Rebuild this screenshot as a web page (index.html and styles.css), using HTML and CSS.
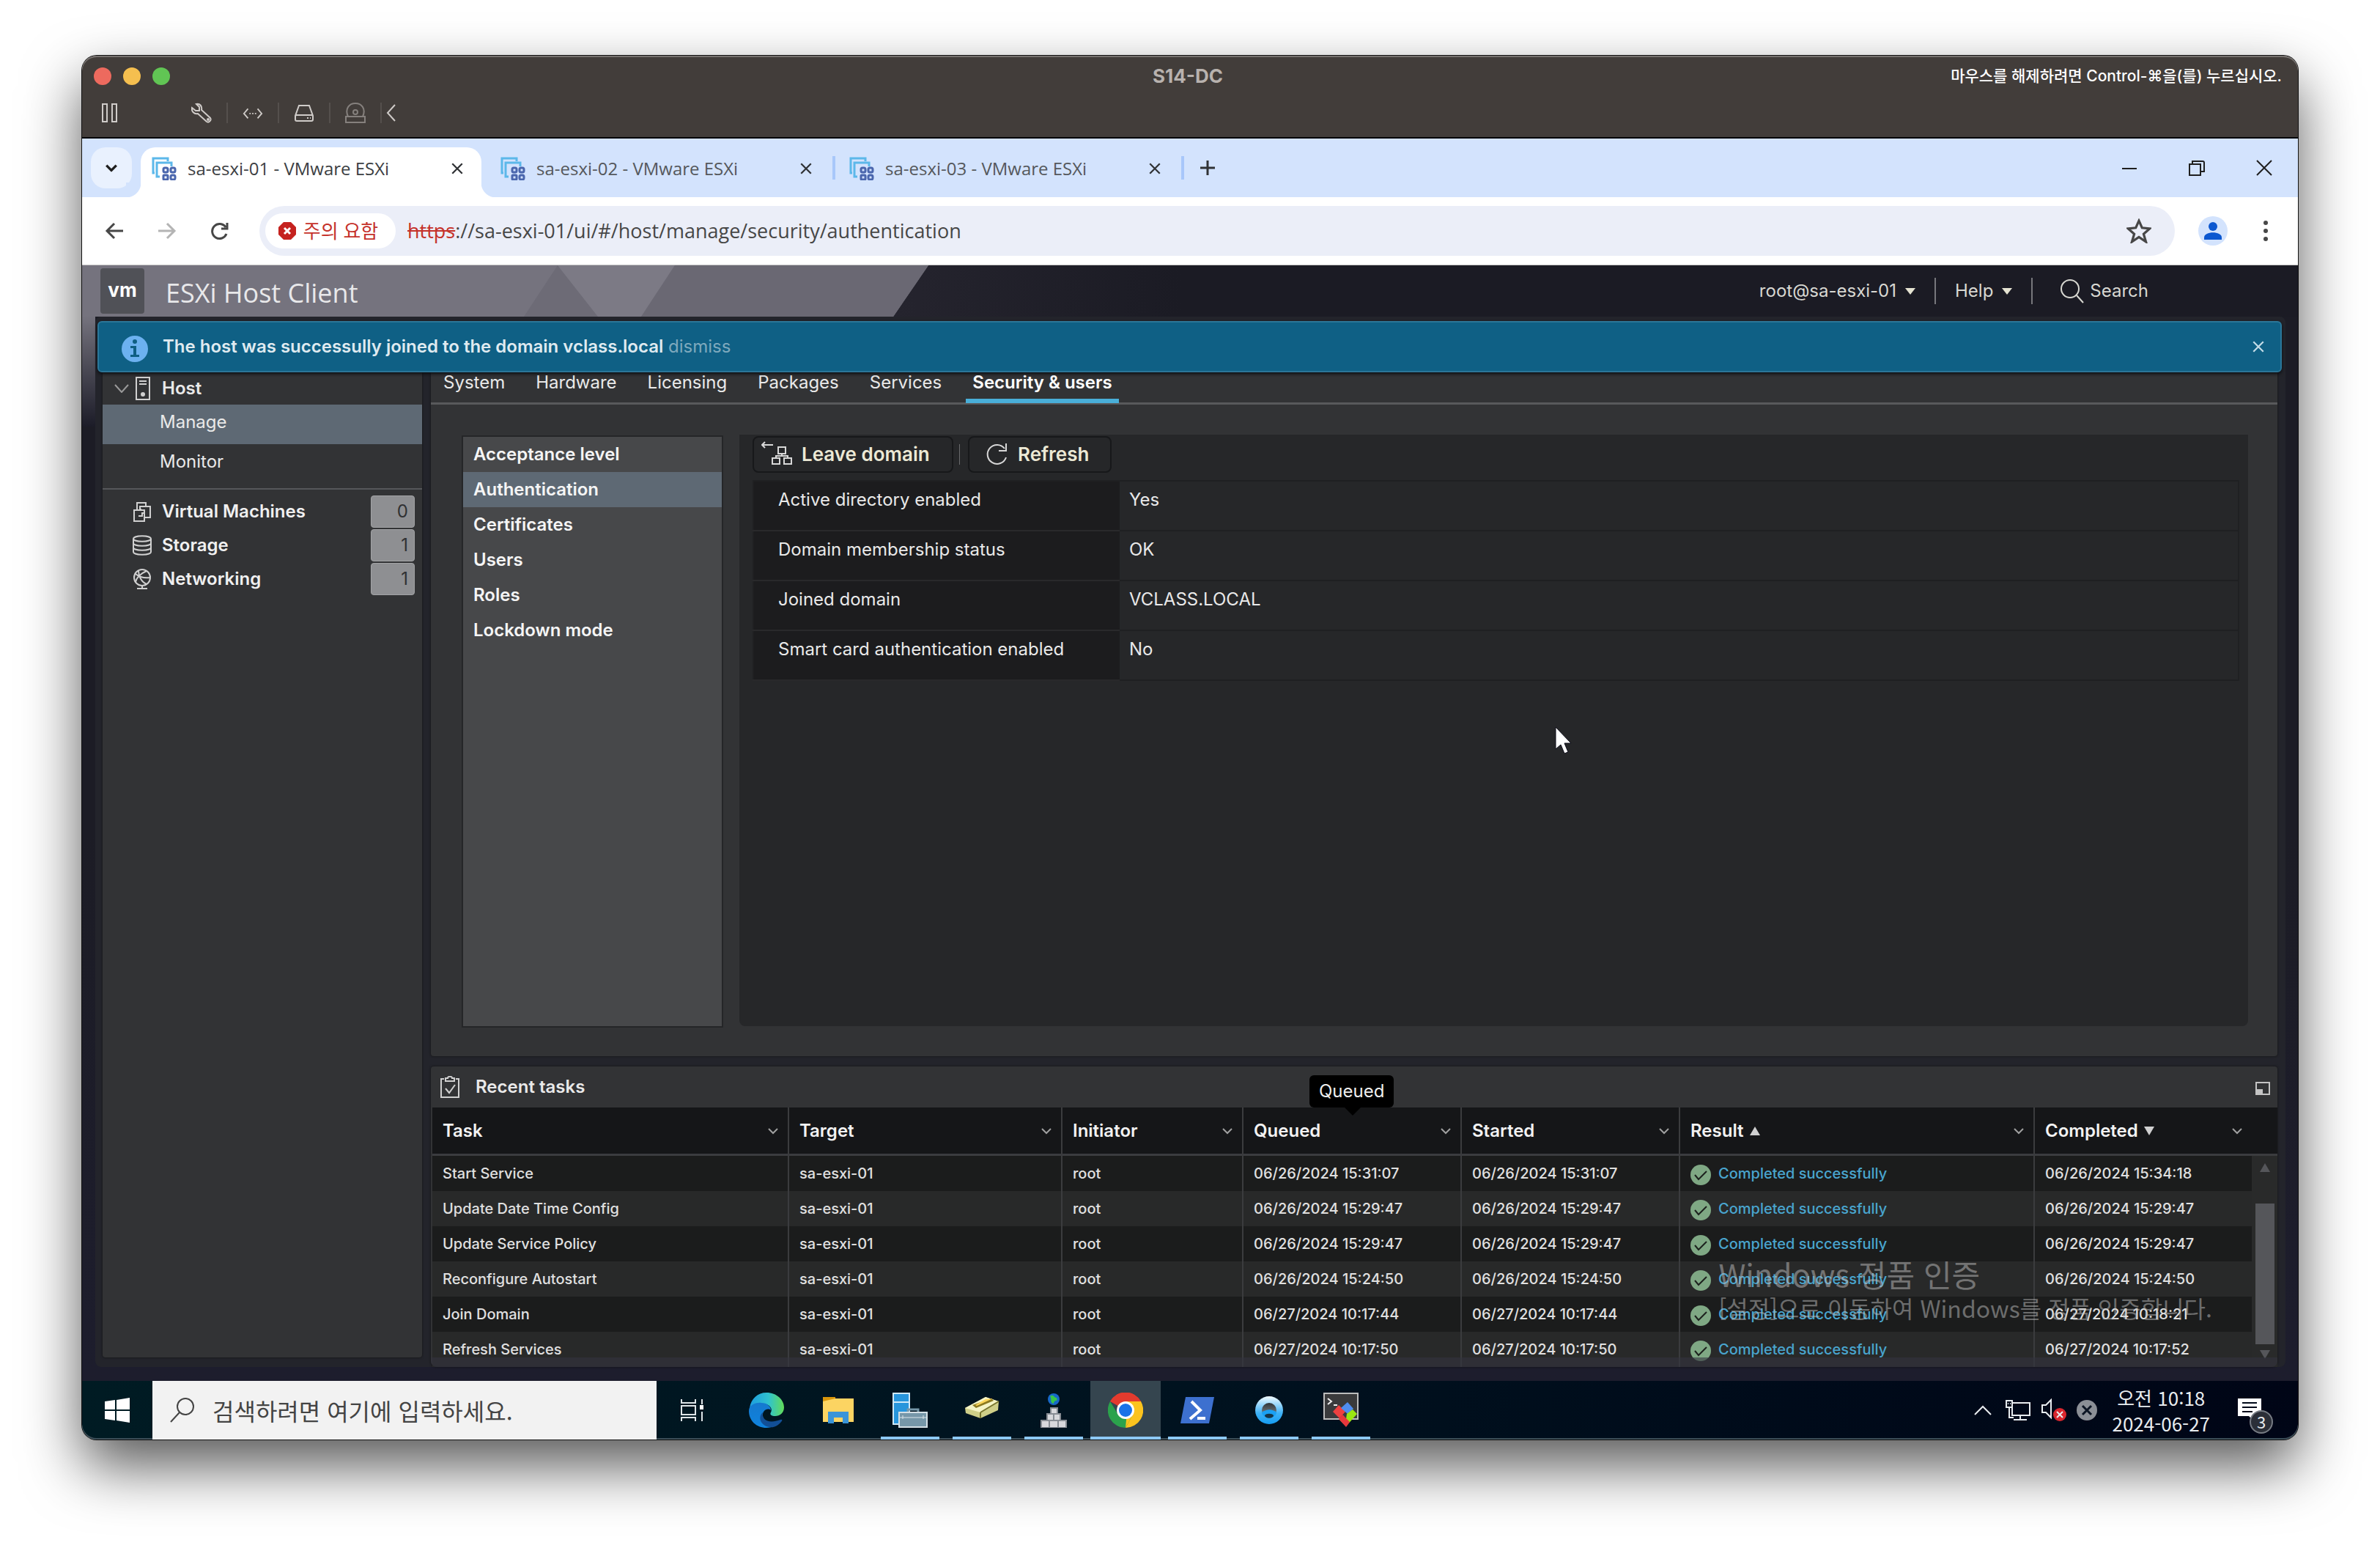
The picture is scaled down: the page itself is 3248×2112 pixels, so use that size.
FILE: index.html
```html
<!DOCTYPE html>
<html lang="ko">
<head>
<meta charset="utf-8">
<meta name="viewport" content="width=device-width, initial-scale=1">
<title>S14-DC</title>
<link rel="stylesheet" href="styles.css">
</head>
<body>
<svg class="defs" aria-hidden="true">
  <symbol id="i-x" viewBox="0 0 16 16"><path d="M2 2l12 12M14 2L2 14"/></symbol>
  <symbol id="i-down" viewBox="0 0 16 10"><path d="M2 2l6 6 6-6"/></symbol>
  <symbol id="i-esxi" viewBox="0 0 34 32">
    <path d="M4 22H2V2h20v4" fill="none" stroke="#5cb8ea" stroke-width="3"/>
    <path d="M11 27H7V8h20v5" fill="none" stroke="#5cb8ea" stroke-width="3"/>
    <g fill="none" stroke="#4a66ad" stroke-width="3"><rect x="16" y="15" width="6" height="6" rx="2"/><rect x="26" y="15" width="6" height="6" rx="2"/><rect x="16" y="25" width="6" height="6" rx="1"/><rect x="26" y="25" width="6" height="6" rx="2"/></g>
  </symbol>
  <symbol id="i-ok" viewBox="0 0 28 28"><circle cx="14" cy="14" r="14" fill="#7fa884"/><path d="M6 14l5 6L22 9" fill="none" stroke="#1d221e" stroke-width="2"/></symbol>
</svg>

<div class="window">
  <header class="titlebar">
    <div class="title-row">
      <div class="lights">
        <button class="light red" aria-label="닫기"></button>
        <button class="light yellow" aria-label="최소화"></button>
        <button class="light green" aria-label="확대"></button>
      </div>
      <h1 class="title">S14-DC</h1>
      <p class="release">마우스를 해제하려면 Control-⌘을(를) 누르십시오.</p>
    </div>
    <div class="tool-row">
      <button class="tool first" aria-label="일시 정지"><svg viewBox="0 0 28 28"><path d="M4 2h6v24H4zM17 2h6v24h-6z"/></svg></button>
      <button class="tool" aria-label="설정"><svg viewBox="0 0 28 28"><path d="M7 2l4 4v5H6L1 7c-1 5 3 9 8 8l12 11c3 2 7-2 5-5L14 10c1-5-2-9-7-8z"/><circle cx="23" cy="23" r="1"/></svg></button>
      <button class="tool" aria-label="네트워크"><svg viewBox="0 0 30 28"><path d="M8 8l-6 7 6 7M22 8l6 7-6 7"/><path d="M10 15h2M14 15h2M18 15h2"/></svg></button>
      <button class="tool" aria-label="하드 디스크"><svg viewBox="0 0 28 28"><path d="M7 4h14l5 14v5q0 2-2 2H4q-2 0-2-2v-5zM2 18q1-1 2-1h20q1 0 2 1M18 21h2M22 21h1"/></svg></button>
      <button class="tool dim" aria-label="CD/DVD"><svg viewBox="0 0 28 28"><path d="M1 19h26v8H1zM4 19C-1 8 6 1 14 1s15 7 10 18"/><circle cx="14" cy="13" r="3"/></svg></button>
      <button class="tool" aria-label="접기"><svg class="narrow" viewBox="0 0 14 28"><path d="M12 3L2 14l10 11"/></svg></button>
    </div>
  </header>

  <div class="tabstrip">
    <button class="tab-search" aria-label="탭 검색"><svg viewBox="0 0 16 10"><use href="#i-down"/></svg></button>
    <div class="tab active"><svg class="fav"><use href="#i-esxi"/></svg><a href="#t1">sa-esxi-01 - VMware ESXi</a><button class="close" aria-label="탭 닫기"><svg><use href="#i-x"/></svg></button></div>
    <div class="tab"><svg class="fav"><use href="#i-esxi"/></svg><a href="#t2">sa-esxi-02 - VMware ESXi</a><button class="close" aria-label="탭 닫기"><svg><use href="#i-x"/></svg></button></div>
    <div class="tab"><svg class="fav"><use href="#i-esxi"/></svg><a href="#t3">sa-esxi-03 - VMware ESXi</a><button class="close" aria-label="탭 닫기"><svg><use href="#i-x"/></svg></button></div>
    <button class="newtab" aria-label="새 탭"><svg viewBox="0 0 22 22"><path d="M11 1v20M1 11h20"/></svg></button>
    <div class="wincontrols">
      <button aria-label="최소화"><svg viewBox="0 0 22 22"><path d="M1 12h20"/></svg></button>
      <button aria-label="이전 크기로"><svg viewBox="0 0 22 22"><path d="M1 6h15v15H1zM5 6V2h14q2 0 2 2v12h-5"/></svg></button>
      <button aria-label="닫기"><svg viewBox="0 0 22 22"><path d="M1 1l20 20M21 1L1 21"/></svg></button>
    </div>
  </div>

  <div class="toolbar">
    <button class="nav" aria-label="뒤로"><svg viewBox="0 0 26 26"><path d="M25 13H3M13 3L3 13l10 10"/></svg></button>
    <button class="nav off" aria-label="앞으로"><svg viewBox="0 0 26 26"><path d="M1 13h22M13 3l10 10-10 10"/></svg></button>
    <button class="nav" aria-label="새로고침"><svg viewBox="0 0 26 26"><path d="M22 17a10 10 0 1 1-1-9M23 2v8h-8"/></svg></button>
    <div class="omnibox">
      <button class="chip"><svg viewBox="0 0 24 24"><path d="M7 0h10l7 7v10l-7 7H7l-7-7V7z" fill="#c5221f"/><path d="M8 8l8 8M16 8l-8 8" stroke="#fff" stroke-width="3"/></svg>주의 요함</button>
      <label class="scheme" for="url">https</label>
      <input class="url" id="url" value="://sa-esxi-01/ui/#/host/manage/security/authentication">
      <button class="star" aria-label="북마크"><svg viewBox="0 0 32 32"><path d="M16 3l4 9 10 1-8 7 3 10-9-6-9 6 3-10-8-7 10-1z"/></svg></button>
    </div>
    <button class="profile" aria-label="프로필"><svg viewBox="0 0 40 40"><circle cx="20" cy="20" r="20" fill="#d3e3fd"/><circle cx="20" cy="14" r="6" fill="#0b57d0"/><path d="M8 32v-3c0-9 24-9 24 0v3z" fill="#0b57d0"/></svg></button>
    <button class="menu" aria-label="메뉴"><svg viewBox="0 0 8 30"><circle cx="4" cy="4" r="3"/><circle cx="4" cy="15" r="3"/><circle cx="4" cy="26" r="3"/></svg></button>
  </div>

  <div class="app">
    <header class="apphead">
      <svg class="art" viewBox="0 0 1160 70" aria-hidden="true"><path d="M0 0h1155l-48 70H0z" fill="#75737e"/><path d="M649 0l-46 70h101z" fill="#6d6b76"/><path d="M649 0h160l-46 70h-59z" fill="#7c7a85"/><path d="M809 0h346l-48 70H763z" fill="#6a6873"/></svg>
      <span class="vm">vm</span>
      <span class="product">ESXi Host Client</span>
      <nav class="usernav">
        <button class="drop">root@sa-esxi-01</button>
        <button class="drop">Help</button>
        <button class="find"><svg viewBox="0 0 32 34"><circle cx="13" cy="14" r="12"/><path d="M22 23l9 10"/></svg>Search</button>
      </nav>
    </header>

    <div class="shell">
      <div class="banner" role="status">
        <svg class="info" viewBox="0 0 36 36"><circle cx="18" cy="18" r="18" fill="#6cb1f0"/><g fill="#0f5f83"><circle cx="18" cy="8" r="3"/><path d="M12 14h8v12h4v3H12v-3h4v-9h-4z"/></g></svg>
        <p><strong>The host was successully joined to the domain vclass.local</strong> <a href="#dismiss">dismiss</a></p>
        <button class="bclose" aria-label="Close"><svg viewBox="0 0 16 16"><use href="#i-x"/></svg></button>
      </div>

      <div class="content">
        <aside class="side">
          <a class="host" href="#host"><svg class="chev" viewBox="0 0 20 12"><path d="M1 1l9 10 9-10"/></svg><svg class="ico20" viewBox="0 0 20 32"><path d="M1 1h18v30H1zM5 6h10M5 10h10"/><circle cx="10" cy="24" r="3" fill="#d0d0d0" stroke="none"/></svg>Host</a>
          <a class="sub on" href="#manage">Manage</a>
          <a class="sub" href="#monitor">Monitor</a>
          <ul class="inventory">
            <li><svg viewBox="0 0 26 28"><path d="M6 12V2h12v5M18 7h6v15h-7M10 12V7h8M2 12h9v-2M2 12h14v15H2zM8 20h5v-4h4"/></svg><a href="#vms">Virtual Machines</a><span>0</span></li>
            <li><svg viewBox="0 0 26 28"><path d="M1 5c0-5 24-5 24 0v18c0 5-24 5-24 0zM1 5c0 5 24 5 24 0M1 11c0 5 24 5 24 0M1 17c0 5 24 5 24 0"/></svg><a href="#storage">Storage</a><span>1</span></li>
            <li><svg viewBox="0 0 26 28"><circle cx="13" cy="12" r="11"/><path d="M4 7c6 5 13 6 20 5M8 3c0 7 4 15 11 18M19 3C12 6 5 12 4 18M6 27h14M13 23v4"/></svg><a href="#net">Networking</a><span>1</span></li>
          </ul>
        </aside>

        <div class="work">
          <main class="panel">
            <nav class="tabs">
              <a href="#system">System</a><a href="#hardware">Hardware</a><a href="#licensing">Licensing</a><a href="#packages">Packages</a><a href="#services">Services</a><a class="on" href="#security">Security &amp; users</a>
            </nav>
            <div class="manage">
              <nav class="vlist">
                <a href="#accept">Acceptance level</a><a class="on" href="#auth">Authentication</a><a href="#certs">Certificates</a><a href="#users">Users</a><a href="#roles">Roles</a><a href="#lock">Lockdown mode</a>
              </nav>
              <section class="detail">
                <div class="actions">
                  <button class="act leave"><svg viewBox="0 0 44 32"><path d="M1 5h15M5 1L1 5l4 4"/><path d="M23 8h10v9H23zM15 23h10v8H15zM31 23h10v8H31zM28 17v3M20 23v-3h16v3"/></svg>Leave domain</button>
                  <span class="rule"></span>
                  <button class="act refresh"><svg viewBox="0 0 30 32"><path d="M28 20A13 13 0 1 1 26 8M28 1v10H18"/></svg>Refresh</button>
                </div>
                <table class="props">
                  <tr><th scope="row">Active directory enabled</th><td>Yes</td></tr>
                  <tr><th scope="row">Domain membership status</th><td>OK</td></tr>
                  <tr><th scope="row">Joined domain</th><td>VCLASS.LOCAL</td></tr>
                  <tr><th scope="row">Smart card authentication enabled</th><td>No</td></tr>
                </table>
              </section>
            </div>
          </main>

          <section class="tasks">
            <div class="tasks-head">
              <svg viewBox="0 0 26 30"><path d="M5 4H1v25h24V4h-4M7 3h3c0-3 6-3 6 0h3v4H7zM7 17l5 6 8-11"/></svg>
              <h2>Recent tasks</h2>
              <button class="max" aria-label="Maximize"><svg viewBox="0 0 20 18"><path d="M1 1h18v16H1z"/><path d="M1 10h9v8H1z" fill="#c4c4c4"/></svg></button>
            </div>
            <div class="grid-wrap">
              <table class="grid">
                <colgroup><col><col class="c-target"><col class="c-init"><col class="c-date"><col class="c-date"><col class="c-result"><col class="c-date"><col class="c-scroll"></colgroup>
                <thead><tr>
                  <th><div>Task<svg><use href="#i-down"/></svg></div></th>
                  <th><div>Target<svg><use href="#i-down"/></svg></div></th>
                  <th><div>Initiator<svg><use href="#i-down"/></svg></div></th>
                  <th><div class="tipped">Queued<svg><use href="#i-down"/></svg><span class="tip" role="tooltip">Queued</span></div></th>
                  <th><div>Started<svg><use href="#i-down"/></svg></div></th>
                  <th><div>Result<i class="up"></i><svg><use href="#i-down"/></svg></div></th>
                  <th><div>Completed<i class="dn"></i><svg><use href="#i-down"/></svg></div></th>
                  <td></td>
                </tr></thead>
                <tbody>
                  <tr><td>Start Service</td><td>sa-esxi-01</td><td>root</td><td>06/26/2024 15:31:07</td><td>06/26/2024 15:31:07</td><td><svg class="ok"><use href="#i-ok"/></svg><a href="#r1">Completed successfully</a></td><td>06/26/2024 15:34:18</td><td class="scroll" rowspan="6"><div class="bar"><i class="up"></i><b></b><i class="dn"></i></div></td></tr>
                  <tr><td>Update Date Time Config</td><td>sa-esxi-01</td><td>root</td><td>06/26/2024 15:29:47</td><td>06/26/2024 15:29:47</td><td><svg class="ok"><use href="#i-ok"/></svg><a href="#r2">Completed successfully</a></td><td>06/26/2024 15:29:47</td></tr>
                  <tr><td>Update Service Policy</td><td>sa-esxi-01</td><td>root</td><td>06/26/2024 15:29:47</td><td>06/26/2024 15:29:47</td><td><svg class="ok"><use href="#i-ok"/></svg><a href="#r3">Completed successfully</a></td><td>06/26/2024 15:29:47</td></tr>
                  <tr><td>Reconfigure Autostart</td><td>sa-esxi-01</td><td>root</td><td>06/26/2024 15:24:50</td><td>06/26/2024 15:24:50</td><td><svg class="ok"><use href="#i-ok"/></svg><a href="#r4">Completed successfully</a></td><td>06/26/2024 15:24:50</td></tr>
                  <tr><td>Join Domain</td><td>sa-esxi-01</td><td>root</td><td>06/27/2024 10:17:44</td><td>06/27/2024 10:17:44</td><td><svg class="ok"><use href="#i-ok"/></svg><a href="#r5">Completed successfully</a></td><td>06/27/2024 10:18:21</td></tr>
                  <tr><td>Refresh Services</td><td>sa-esxi-01</td><td>root</td><td>06/27/2024 10:17:50</td><td>06/27/2024 10:17:50</td><td><svg class="ok"><use href="#i-ok"/></svg><a href="#r6">Completed successfully</a></td><td>06/27/2024 10:17:52</td></tr>
                </tbody>
              </table>
            </div>
          </section>
        </div>
      </div>
    </div>
  </div>

  <footer class="taskbar">
    <button class="start" aria-label="시작"><svg viewBox="0 0 34 34"><path d="M0 5l14-2v13H0zM16 3l18-3v16H16zM0 18h14v13L0 29zM16 18h18v16l-18-3z" fill="#fff"/></svg></button>
    <label class="search"><svg viewBox="0 0 34 34"><circle cx="21" cy="12" r="11"/><path d="M13 20L1 33"/></svg><input placeholder="검색하려면 여기에 입력하세요." aria-label="검색"></label>
    <div class="apps">
      <button class="task-view" aria-label="작업 보기"><svg class="tv" viewBox="0 0 32 32"><g fill="none" stroke="#dfe5e8" stroke-width="2"><path d="M2 1v5h19V1M2 31v-5h19v5M2 10h19v12H2zM30 1v7M30 18v13"/></g><path d="M27 9h5v6h-5z" fill="#fff"/></svg></button>
      <button aria-label="Edge"><svg viewBox="0 0 48 48"><defs><linearGradient id="e1" x1="0" x2="1"><stop offset="0" stop-color="#1c9de0"/><stop offset=".55" stop-color="#30c2cf"/><stop offset="1" stop-color="#62dc58"/></linearGradient><linearGradient id="e2" x1="0" x2="0" y1="0" y2="1"><stop offset="0" stop-color="#1579cf"/><stop offset="1" stop-color="#0f83de"/></linearGradient></defs><path d="M1 21C3 8 12 0 24 0c14 0 24 10 24 20 0 8-6 12-12 12-5 0-8-2-6-5 3-5-2-12-11-12-8 0-15 3-18 6z" fill="url(#e1)"/><path d="M0 25c0-8 9-12 17-11 8 0 13 5 13 10-5-4-12 1-11 8 1 8 8 13 16 13-3 2-7 3-11 3C10 48 0 38 0 25z" fill="url(#e2)"/><path d="M19 27c-2 10 8 16 24 10 3-1 3 1 1 3-5 6-11 8-15 7-12-1-18-13-10-20z" fill="#124f96"/></svg></button>
      <button aria-label="파일 탐색기"><svg viewBox="0 0 48 48"><path d="M3 6h17v6H3z" fill="#d9960b"/><path d="M3 12l17-4h25v32H3z" fill="#fcd462"/><path d="M10 26h28v16h-8v-8H18v8h-8z" fill="#3a94d8"/></svg></button>
      <button class="run" aria-label="서버 관리자"><svg viewBox="0 0 48 48"><path d="M1 1h22v42H1zM1 13h22" fill="#2795dc" stroke="#cfe8f8" stroke-width="2"/><path d="M9 27h38v20H9z" fill="#7697a9" stroke="#d4dfe5" stroke-width="2"/><path d="M21 26v-3h14v3" fill="none" stroke="#7697a9" stroke-width="3"/><path d="M10 34h36M14 31v5M42 31v5" stroke="#dbe5ea" stroke-width="1"/></svg></button>
      <button class="run" aria-label="DNS"><svg viewBox="0 0 48 48"><path d="M1 21L29 6l18 6-1 12-24 11L2 28z" fill="#cfcf88"/><path d="M1 21l21 6 25-15-18-6z" fill="#f5f4c6"/><path d="M11 17l26-9 3 3-24 10z" fill="#8c7a20"/><path d="M15 17l14-8 10-1-22 10z" fill="#ffd75b"/><path d="M22 27v8M22 27l25-15" stroke="#77742e"/></svg></button>
      <button class="run" aria-label="도메인"><svg viewBox="0 0 48 48"><circle cx="24" cy="9" r="8" fill="#1769c8"/><path d="M19 5c5-4 5 2 9 2 2 7-3 1-4 8-6-1-2-6-5-10z" fill="#39c64b"/><g fill="#d8d8dc" stroke="#888d94"><path d="M20 21h9v8h-9zM15 29h9v9h-9zM24 29h9v9h-9zM7 38h11v10H7zM18 38h12v10H18zM30 38h11v10H30z"/></g></svg></button>
      <button class="run current" aria-label="Chrome"><svg viewBox="0 0 48 48"><path d="M3 12a24 24 0 0 1 42 0L24 24z" fill="#e33b2e"/><path d="M45 12a24 24 0 0 1-21 36l10-19V12z" fill="#fcc31e"/><path d="M3 12a24 24 0 0 0 21 36l10-18-20 0z" fill="#2ba24c"/><path d="M24 12h21L24 24zM24 48l10-18-8-4z" fill="#fcc31e"/><path d="M3 12h42a24 24 0 0 0-42 0z" fill="#e33b2e"/><circle cx="24" cy="24" r="12" fill="#fff"/><circle cx="24" cy="24" r="9" fill="#1a73e8"/></svg></button>
      <button class="run" aria-label="PowerShell"><svg viewBox="0 0 48 48"><path d="M8 6h39l-7 36H1z" fill="#3d70cf"/><path d="M16 12l12 12-14 12" fill="none" stroke="#fff" stroke-width="4"/><path d="M24 35h11" stroke="#fff" stroke-width="4"/></svg></button>
      <button class="run" aria-label="동기화"><svg viewBox="0 0 48 48"><defs><linearGradient id="s1" x1="0" x2="0" y1="0" y2="1"><stop offset="0" stop-color="#f2fbff"/><stop offset=".6" stop-color="#3fb2f7"/><stop offset="1" stop-color="#149cf2"/></linearGradient><linearGradient id="s2" x1="0" x2="0" y1="0" y2="1"><stop offset="0" stop-color="#2f3438"/><stop offset="1" stop-color="#8a9298"/></linearGradient></defs><circle cx="24" cy="24" r="19" fill="url(#s1)"/><circle cx="24" cy="24" r="10" fill="url(#s2)"/><path d="M14 27c7-5 14-5 20 0 0 3-3 7-10 7s-10-4-10-7z" fill="#1aa0f4"/><path d="M18 31c2-3 10-3 12 0 0 5-12 5-12 0z" fill="#14364a"/></svg></button>
      <button class="run" aria-label="MobaXterm"><svg viewBox="0 0 48 48"><path d="M1 1h46v35H1z" fill="#3a3a3c" stroke="#bdbdbd" stroke-width="2"/><path d="M6 8l5 4-5 4M14 17h5" fill="none" stroke="#eee" stroke-width="2"/><path d="M13 26l8-9 9 9-8 9z" fill="#ee4040"/><path d="M24 21l9-8 8 9-8 7z" fill="#4f8df0"/><path d="M32 29l8-6 6 6-15 17-9-9 5-6 4 5z" fill="#9ae512"/><path d="M21 36l5-6 10 10-5 7z" fill="#e8373c"/></svg></button>
    </div>
    <div class="tray">
      <svg class="t-up" viewBox="0 0 26 16"><path d="M2 14L13 3l11 11"/></svg>
      <svg class="t-net" viewBox="0 0 34 28"><path d="M9 4h24v17H9zM20 21v6M11 27h18M1 1h8v9H1zM5 10v14h6M3 5h1M6 5h1"/></svg>
      <svg class="t-vol" viewBox="0 0 34 32"><path d="M1 9h5l7-7v24l-7-7H1z"/><circle cx="25" cy="22" r="9" fill="#d9272e" stroke="none"/><path d="M21 18l8 8M29 18l-8 8"/></svg>
      <svg class="t-off" viewBox="0 0 28 28"><circle cx="14" cy="14" r="14" fill="#8b8f96" stroke="none"/><path d="M8 8l12 12M20 8L8 20" stroke="#0c1524" stroke-width="3"/></svg>
      <div class="clock"><span>오전 10:18</span><span>2024-06-27</span></div>
      <button class="notes" aria-label="알림"><svg viewBox="0 0 32 32"><path d="M0 0h32v24h-9v8l-8-8H0z" fill="#fff"/><path d="M6 6h20M6 12h20M6 18h14" stroke="#01091a" stroke-width="2"/></svg><span>3</span></button>
    </div>
  </footer>

  <div class="watermark"><p class="big">Windows 정품 인증</p><p>[설정]으로 이동하여 Windows를 정품 인증합니다.</p></div>
  <svg class="cursor" viewBox="0 0 24 38"><path d="M1 1v30l7-6 5 12 5-2-5-12h9z" fill="#fff" stroke="#0c0c18" stroke-width="1"/></svg>
</div>
</body>
</html>
```
FILE: styles.css
```css
* { box-sizing: border-box; }
body {
  margin: 0;
  min-height: 100vh;
  padding: 76px 112px 148px;
  display: flex;
  background: #fff;
  font-family: Inter, "Noto Sans CJK KR", sans-serif;
  font-size: 24px;
  line-height: 32px;
  color: #e9e9e9;
}
h1, h2, p, ul { margin: 0; padding: 0; font-size: inherit; }
strong { font-weight: 600; }
ul { list-style: none; }
a { color: inherit; text-decoration: none; }
button { border: 0; padding: 0; background: none; color: inherit; font: inherit; display: flex; align-items: center; justify-content: center; }
input { border: 0; padding: 0; background: none; font: inherit; color: inherit; min-width: 0; }
svg { display: block; fill: none; stroke: currentColor; stroke-width: 2; flex: none; }
svg [fill]:not([stroke]) { stroke: none; }
.defs { position: absolute; width: 0; height: 0; }

.window {
  position: relative;
  flex: 1;
  min-width: 0;
  display: flex;
  flex-direction: column;
  border-radius: 20px;
  box-shadow: 0 0 0 1px #111, 0 36px 80px rgba(0, 0, 0, .66);
}

/* Host window title bar */
.titlebar { height: 113px; background: #423d3a; border-radius: 20px 20px 0 0; border-bottom: 2px solid #000; box-shadow: inset 0 2px 0 #77726f; padding: 12px 22px 0 16px; }
.title-row { display: grid; grid-template-columns: 1fr auto 1fr; align-items: center; height: 32px; }
.lights { display: flex; gap: 16px; }
.light { width: 24px; height: 24px; border-radius: 50%; }
.red { background: #ed6a5e; }
.yellow { background: #f5bf4f; }
.green { background: #61c554; }
.title { font: bold 26px/32px Inter, sans-serif; color: #b8b2ae; }
.release { justify-self: end; font: 500 21px/32px Inter, "Noto Sans CJK KR", sans-serif; color: #fff; }
.tool-row { display: flex; height: 40px; margin-top: 14px; padding-left: 8px; align-items: center; color: #cfcbc8; }
.tool { width: 70px; height: 28px; border-right: 2px solid #55504d; }
.tool svg { height: 28px; width: 28px; }
.tool.first { width: 28px; margin-right: 77px; border: 0; }
.tool:last-child { width: 26px; border: 0; }
.tool svg.narrow { width: 14px; }
.tool.dim { color: #85807d; }

/* Browser tab strip */
.tabstrip { height: 80px; padding: 12px 0 0 12px; display: flex; background: #d3e3fd; color: #3c4043; font: 24px/32px "Open Sans", "Noto Sans CJK KR", sans-serif; }
.tab-search { width: 56px; height: 56px; border-radius: 20px; background: #e9f1fe; margin-right: 12px; }
.tab-search svg { width: 18px; height: 12px; stroke-width: 3; color: #1f1f1f; }
.tab { position: relative; width: 476px; height: 68px; padding: 0 24px 10px 15px; display: flex; align-items: center; color: #55585c; }
.tab.active { width: 465px; margin-right: 11px; background: #fff; border-radius: 20px 20px 0 0; color: #3c4043; }
.tab.active::before, .tab.active::after { content: ""; position: absolute; bottom: 0; width: 20px; height: 20px; }
.tab.active::before { right: 100%; background: radial-gradient(circle at 0 0, #d3e3fd 20px, #fff 21px); }
.tab.active::after { left: 100%; background: radial-gradient(circle at 100% 0, #d3e3fd 20px, #fff 21px); }
.tab:not(.active) { padding-right: 35px; border: 0; }
.tab:not(.active)::after { content: ""; position: absolute; right: 4px; top: 12px; width: 4px; height: 32px; background: #a8c7fa; }
.fav { width: 34px; height: 32px; margin-right: 15px; }
.tab a { flex: 1; white-space: nowrap; }
.close svg { width: 18px; height: 18px; stroke-width: 2; color: #303235; }
.newtab { width: 56px; height: 56px; }
.newtab svg { width: 22px; height: 22px; stroke-width: 3; color: #303235; }
.wincontrols { margin-left: auto; display: flex; color: #1f1f1f; }
.wincontrols button { width: 92px; height: 56px; }
.wincontrols svg { width: 22px; height: 22px; }

/* Address bar */
.toolbar { height: 93px; padding: 0 24px 0 8px; display: flex; align-items: center; background: #fff; border-bottom: 1px solid #c7c7c7; color: #474747; font: 27px/36px "Open Sans", "Noto Sans CJK KR", sans-serif; }
.nav { width: 72px; height: 56px; }
.nav svg { width: 26px; height: 26px; stroke-width: 3; }
.nav.off { color: #b4b4b4; }
.omnibox { flex: 1; height: 68px; margin-left: 18px; padding: 0 32px 0 8px; display: flex; align-items: center; border-radius: 34px; background: #ebeef8; }
.chip { height: 48px; width: 178px; gap: 10px; padding-right: 6px; border-radius: 24px; background: #fff; color: #c5322b; font-size: 26px; }
.chip svg { width: 24px; height: 24px; }
.scheme { margin-left: 16px; color: #c5322b; text-decoration: line-through; }
.url { flex: 1; }
.star svg { width: 34px; height: 34px; stroke-width: 3; }
.profile { width: 40px; height: 40px; margin: 0 32px; }
.profile svg { width: 40px; height: 40px; }
.menu { width: 40px; height: 40px; }
.menu svg { width: 8px; height: 30px; fill: #474747; stroke: none; }

/* ESXi host client */
.app { flex: 1; display: flex; flex-direction: column; padding-bottom: 19px; background: linear-gradient(#74727d, #1c1c28) 0 70px / 18px 150px no-repeat, linear-gradient(#1c1c25 50%, #1d1d2d); }
.apphead { position: relative; height: 70px; display: flex; align-items: center; padding: 0 204px 0 25px; background: linear-gradient(90deg, #25242e 1100px, #1b1b24 1500px); }
.art { position: absolute; left: 0; top: 0; width: 1160px; height: 70px; stroke: none; }
.vm { position: relative; width: 60px; height: 62px; border-radius: 4px; background: #505157; color: #fff; font: bold 26px/60px Inter, sans-serif; text-align: center; }
.product { position: relative; margin-left: 29px; padding-top: 6px; font: 36px/40px "Open Sans", sans-serif; color: #e8e8ea; }
.usernav { margin-left: auto; display: flex; align-items: center; height: 36px; color: #d8d8d2; }
.usernav button { height: 36px; }
.drop { padding-right: 26px; margin-right: 26px; border-right: 2px solid #77777c; }
.drop::after { content: ""; margin-left: 12px; border: 7px solid transparent; border-top: 9px solid #e5e3d2; border-bottom: 0; }
.find svg { width: 32px; height: 34px; margin-right: 8px; margin-left: 12px; }
.shell { flex: 1; display: flex; flex-direction: column; margin: 0 17px 0 18px; padding: 6px 5px 0 3px; border-radius: 8px; background: #23242b; }
.banner { position: relative; height: 70px; display: flex; align-items: center; padding: 0 20px 0 31px; border: 2px solid #2b7698; border-radius: 6px; background: #0f6085; box-shadow: 0 2px 4px #0b0c10; color: #dfeaf0; }
.info { width: 36px; height: 36px; margin: 6px 20px 0 0; stroke: none; }
.banner a { color: #7ea9bd; }
.bclose { width: 20px; height: 20px; margin-left: auto; color: #c3dbe6; }
.bclose svg { width: 18px; height: 18px; }

.content { flex: 1; display: grid; grid-template-columns: 436px 1fr; gap: 12px; padding: 0 6px 0 7px; }
.side { margin-bottom: 13px; background: #323335; border-radius: 0 0 4px 4px; box-shadow: 0 0 3px #111; }
.host { display: flex; align-items: center; height: 44px; padding-left: 16px; font-weight: 600; }
.chev { width: 20px; height: 12px; margin-right: 9px; color: #9a9a9a; }
.ico20 { width: 20px; height: 32px; margin-right: 16px; color: #d0d0d0; }
.sub { display: block; height: 54px; padding: 8px 0 0 78px; }
.sub.on { background: #5e6974; }
.inventory { margin-top: 6px; padding: 7px 10px 0 41px; border-top: 2px solid #55575a; }
.inventory li { display: flex; align-items: center; height: 46px; font-weight: 600; color: #f0f0f0; }
.inventory svg { width: 26px; height: 28px; margin-right: 14px; color: #d0d0d0; }
.inventory span { width: 60px; height: 44px; margin-left: auto; padding-right: 8px; border: 1px solid #a2a3a5; border-radius: 4px; background: #8e8f92; color: #303133; font-weight: normal; line-height: 42px; text-align: right; }

.work { display: flex; flex-direction: column; gap: 14px; min-width: 0; }
.panel { flex: 1; display: flex; flex-direction: column; background: #323335; border-radius: 0 0 4px 4px; box-shadow: 0 0 3px #111; }
.tabs { display: flex; gap: 24px; height: 44px; padding-left: 8px; border-bottom: 3px solid #58595b; }
.tabs a { height: 42px; padding: 0 9px; line-height: 28px; }
.tabs .on { font-weight: 600; color: #fff; border-bottom: 6px solid #49afd9; }
.manage { flex: 1; display: grid; grid-template-columns: 353px 1fr; gap: 24px; padding: 41px 40px 41px 44px; }
.vlist { margin-top: 3px; background: #47484a; box-shadow: 0 0 0 2px #252628; font-weight: 600; color: #f5f5f5; }
.vlist a { display: block; height: 48px; padding-left: 14px; line-height: 48px; }
.vlist .on { background: #5e6974; }
.detail { padding: 2px 12px 0 18px; border-radius: 0 0 8px 8px; background: #262729; }
.actions { display: flex; align-items: center; height: 50px; margin-bottom: 10px; }
.act { height: 50px; border: 2px solid #17181a; border-radius: 8px; justify-content: flex-start; font-size: 26px; font-weight: 600; color: #ece9d5; }
.act svg { height: 32px; color: #d8d8d8; }
.leave { width: 274px; padding-left: 10px; }
.leave svg { width: 44px; margin: 0 11px 4px 0; }
.refresh { width: 196px; padding-left: 22px; }
.refresh svg { width: 30px; margin-right: 14px; }
.rule { width: 1px; height: 28px; margin: 0 11px 0 8px; background: #6b6c6e; }
.props { width: 100%; border-collapse: collapse; table-layout: fixed; }
.props tr { height: 68px; border: 2px solid #1f2022; }
.props th { width: 500px; padding: 9px 0 0 33px; background: #1c1c1e; font-weight: normal; text-align: left; vertical-align: top; border-bottom: 2px solid #29292b; }
.props td { padding: 9px 0 0 13px; vertical-align: top; }

/* Recent tasks */
.tasks { background: #323335; border-radius: 4px 4px 8px 8px; box-shadow: 0 0 3px #111; }
.tasks-head { display: flex; align-items: center; height: 56px; padding: 0 10px 0 13px; }
.tasks-head svg { width: 26px; height: 30px; color: #d0d0d0; }
.tasks-head h2 { margin-left: 22px; flex: 1; font-weight: 600; }
.tasks-head .max svg { width: 20px; height: 18px; color: #c4c4c4; margin-top: 4px; }
.grid-wrap { position: relative; padding-left: 2px; }
.grid-wrap::after { content: ""; position: absolute; left: 0; right: 0; bottom: 0; height: 13px; background: rgba(52, 52, 64, .6); border-radius: 0 0 8px 8px; }
.grid { width: 100%; table-layout: fixed; border-collapse: separate; border-spacing: 0; }
.c-target { width: 373px; }
.c-init { width: 247px; }
.c-date { width: 298px; }
.c-result { width: 484px; }
.c-scroll { width: 35px; }
.grid th, .grid td { padding: 0 0 0 14px; text-align: left; white-space: nowrap; border-left: 2px solid #3b3c3e; }
.grid th:first-child, .grid td:first-child { border-left: 0; }
.grid thead th, .grid thead td { height: 66px; background: #151618; border-bottom: 3px solid #3b3c3f; font-weight: 600; color: #f2f2f2; }
.grid thead td { border-left: 0; }
.grid th div { display: flex; align-items: center; padding-right: 12px; }
.grid th svg { width: 16px; height: 10px; margin-left: auto; color: #a0a0a0; }
.up, .dn { display: block; border: 7px solid transparent; }
.up { border-top: 0; border-bottom: 12px solid; border-bottom-color: currentColor; }
.dn { border-bottom: 0; border-top: 12px solid; border-top-color: currentColor; }
th .up, th .dn { margin-left: 8px; color: #d0d0d0; }
.grid tbody td { height: 48px; background: #1b1c1c; font-size: 20px; font-weight: 500; color: #e0e0e0; }
.grid tbody tr:nth-child(even) td { background: #282929; }
.grid tbody a { color: #49a5cf; }
.ok { display: inline-block; width: 28px; height: 28px; margin-right: 10px; vertical-align: -9px; }
.grid tbody td.scroll { padding: 0; border: 0; background: #292a2a; vertical-align: top; }
.bar { display: flex; flex-direction: column; align-items: center; height: 288px; padding: 10px 0 11px; color: #55565a; gap: 8px; }
.bar b { width: 26px; height: 192px; margin-top: auto; background: #55565a; }
.tipped { position: relative; }
.tip { position: absolute; left: 76px; bottom: 48px; padding: 0 13px; border-radius: 6px; background: #000; color: #eee; font-weight: normal; line-height: 44px; }
.tip::after { content: ""; position: absolute; left: 48px; top: 100%; border: 11px solid transparent; border-top-color: #000; border-bottom: 0; }

/* Windows taskbar */
.taskbar { height: 80px; display: flex; background: linear-gradient(90deg, #001b23, #00121f 50%, #000516); border-radius: 0 0 20px 20px; overflow: hidden; box-shadow: inset 0 -2px 0 #3b4d57; font: 26px/35px "Noto Sans CJK KR", sans-serif; }
.start { width: 96px; }
.start svg { width: 34px; height: 34px; }
.search { width: 688px; display: flex; align-items: center; padding-left: 24px; background: #f2f2f2; color: #444; }
.search svg { width: 34px; height: 34px; margin-right: 24px; }
.search input { flex: 1; font-size: 32px; }
.search input::placeholder { color: #444; opacity: 1; }
.apps { display: flex; gap: 2px; }
.apps button { width: 96px; position: relative; }
.apps .task-view { margin-right: 4px; }
.apps svg { width: 48px; height: 48px; }
.apps svg.tv { width: 32px; height: 32px; }
.run::after { content: ""; position: absolute; bottom: 0; left: 8px; right: 8px; height: 4px; background: #8cc8f5; }
.current { background: #35454f; }
.current::after { left: 0; right: 0; }
.tray { margin-left: auto; display: flex; align-items: center; padding-right: 34px; color: #e8ecef; }
.t-up { width: 26px; height: 16px; margin-right: 18px; }
.t-net { width: 34px; height: 28px; margin-right: 15px; }
.t-vol { width: 34px; height: 32px; margin-right: 14px; }
.t-off { width: 28px; height: 28px; margin-right: 20px; }
.clock { display: flex; flex-direction: column; align-items: center; margin-right: 38px; }
.notes { position: relative; width: 48px; height: 48px; justify-content: flex-start; }
.notes svg { width: 32px; height: 32px; }
.notes span { position: absolute; right: 0; bottom: -8px; width: 32px; height: 32px; border: 2px solid #777c84; border-radius: 50%; background: #2b2f38; font-size: 22px; line-height: 27px; text-align: center; }

/* Overlays on the guest screen */
.watermark { position: absolute; right: 117px; bottom: 160px; color: rgba(190, 190, 190, .5); font: 32px/40px "Noto Sans CJK KR", sans-serif; }
.watermark .big { font-size: 42px; line-height: 52px; }
.cursor { position: absolute; left: 2010px; top: 915px; width: 24px; height: 38px; }
```
